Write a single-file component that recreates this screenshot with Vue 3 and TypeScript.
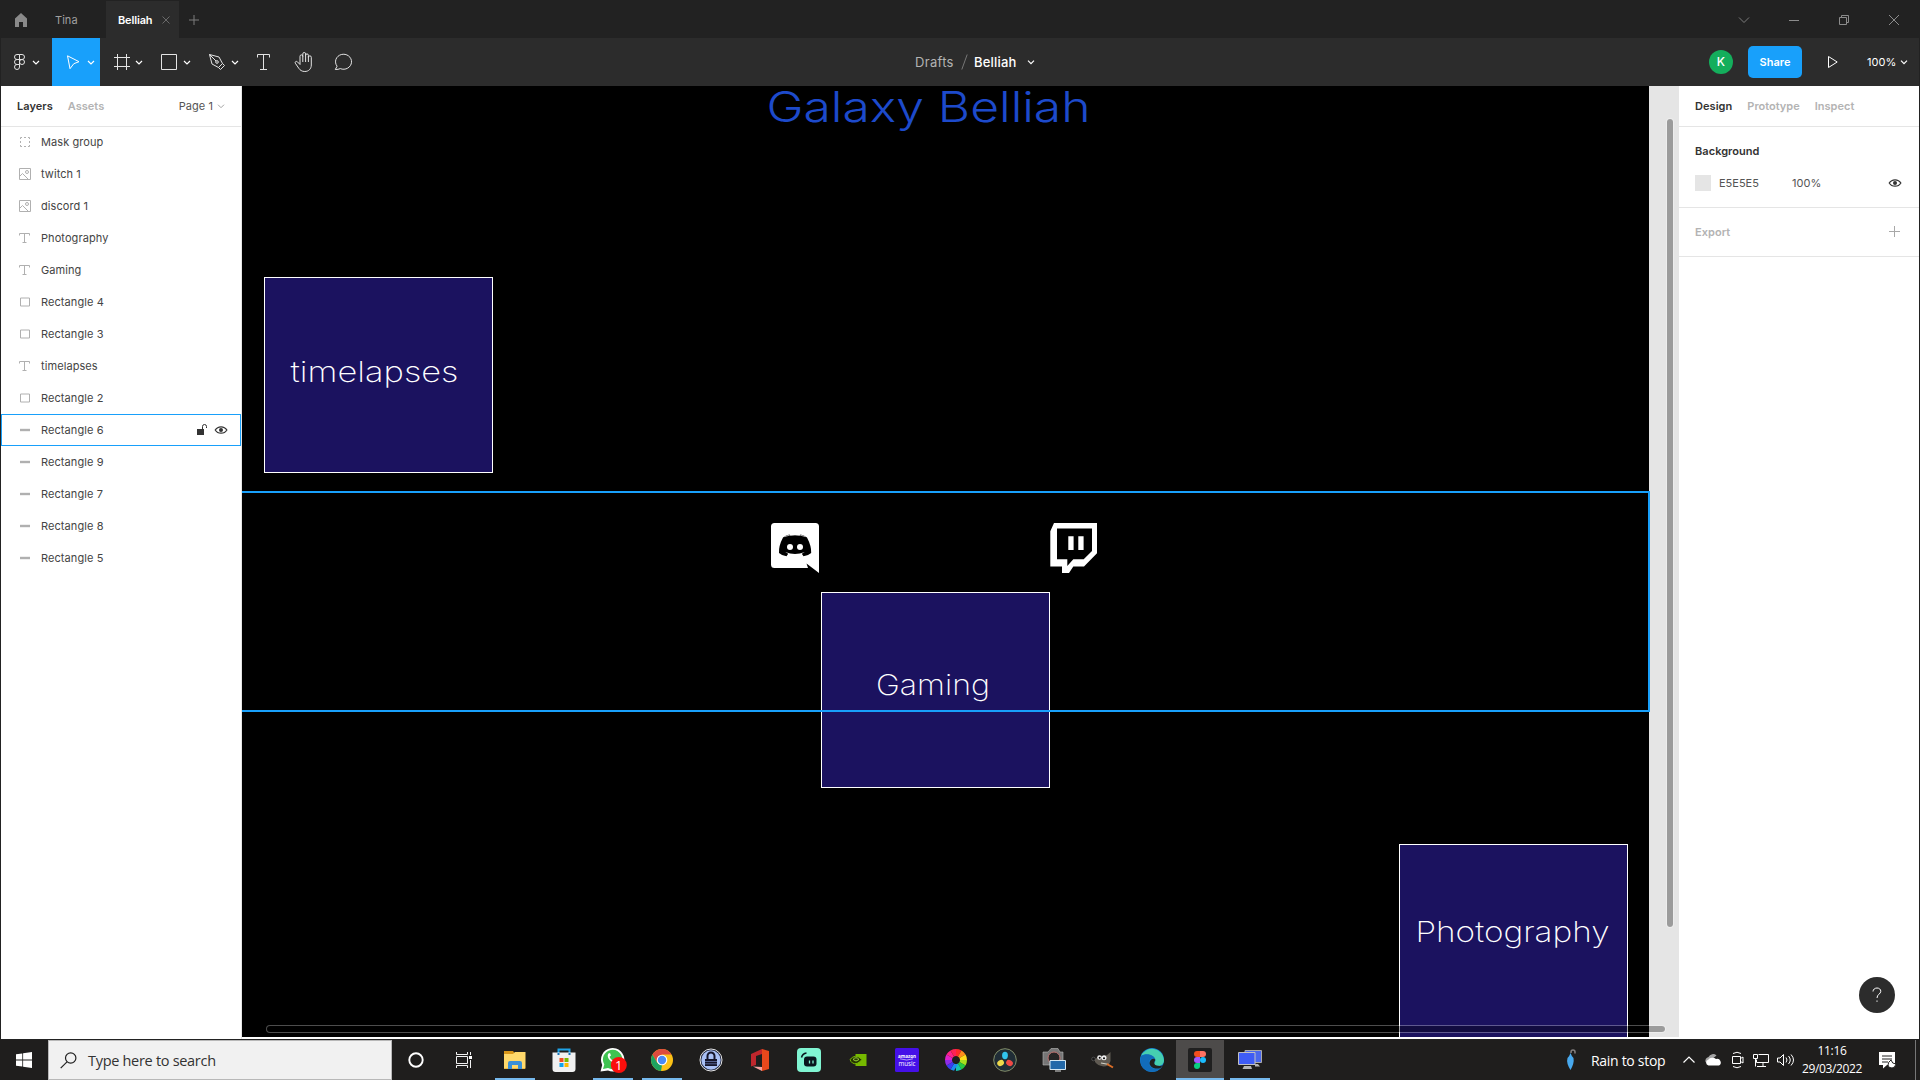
<script setup lang="ts">
interface Layer {
  name: string
  kind: 'mask' | 'image' | 'text' | 'rect' | 'line'
  hovered?: boolean
}

const layers: Layer[] = [
  { name: 'Mask group', kind: 'mask' },
  { name: 'twitch 1', kind: 'image' },
  { name: 'discord 1', kind: 'image' },
  { name: 'Photography', kind: 'text' },
  { name: 'Gaming', kind: 'text' },
  { name: 'Rectangle 4', kind: 'rect' },
  { name: 'Rectangle 3', kind: 'rect' },
  { name: 'timelapses', kind: 'text' },
  { name: 'Rectangle 2', kind: 'rect' },
  { name: 'Rectangle 6', kind: 'line', hovered: true },
  { name: 'Rectangle 9', kind: 'line' },
  { name: 'Rectangle 7', kind: 'line' },
  { name: 'Rectangle 8', kind: 'line' },
  { name: 'Rectangle 5', kind: 'line' },
]

const wheel = ['#ff2a2a', '#ff8a1c', '#ffd91a', '#a5e01e', '#27c840', '#16c5b0', '#1c8cf0', '#3a3df0', '#8f2be8', '#e022c8', '#ff2288', '#ff2255']
</script>

<template>
  <div class="screen">
    <header class="titlebar">
      <svg class="home" width="14" height="16" viewBox="0 0 14 16"><path d="M1 6.500 7 1l6 5.500V15H9v-5H5v5H1z" fill="#8a8a8a" /></svg>
      <span class="tab tina">Tina</span>
      <div class="tab active">
        <span>Belliah</span>
        <svg width="8" height="8" viewBox="0 0 8 8"><path d="M.5.5l7 7M7.500.5l-7 7" stroke="#6a6a6a" fill="none" /></svg>
      </div>
      <svg class="newtab" width="10" height="10" viewBox="0 0 10 10"><path d="M5 0v10M0 5h10" stroke="#7c7c7c" fill="none" /></svg>
      <svg class="winbtns" width="200" height="38" viewBox="1719 0 200 38" fill="none" stroke="#8c8c8c">
        <path d="M1739 17.500l5 5 5-5" stroke="#7c7c7c" />
        <path d="M1789 20.500h10" />
        <path d="M1839.500 17.500h7v7h-7zM1841.500 17.500v-2h7v7h-2" />
        <path d="M1889 15l10 10M1899 15l-10 10" />
      </svg>
    </header>

    <div class="toolbar">
      <div class="tools">
        <svg width="51" height="48" viewBox="1 38 51 48">
          <path d="M19.500 54.500H17a2.500 2.500 0 0 0 0 5h2.500zM19.500 54.500H22a2.500 2.500 0 0 1 0 5h-2.500M19.500 59.500H17a2.500 2.500 0 0 0 0 5h2.500zM19.500 64.500H17a2.500 2.500 0 1 0 2.500 2.500z" />
          <circle cx="22" cy="62" r="2.500" />
          <path class="chev" d="M33 61l3 3 3-3" />
        </svg>
        <svg class="on" width="48" height="48" viewBox="52 38 48 48">
          <path d="M67.500 55.800l11.500 5.900-5.200 2-3.800 5z" />
          <path class="chev" d="M88 61l3 3 3-3" />
        </svg>
        <svg width="48" height="48" viewBox="100 38 48 48">
          <path d="M117.500 54v16M126.500 54v16M114 57.500h16M114 66.500h16" />
          <path class="chev" d="M136 61l3 3 3-3" />
        </svg>
        <svg width="48" height="48" viewBox="148 38 48 48">
          <path d="M161.500 54.500h15v15h-15z" />
          <path class="chev" d="M184 61l3 3 3-3" />
        </svg>
        <svg width="48" height="48" viewBox="196 38 48 48">
          <path d="M209.500 54.500l9.500 2.500 3.500 6.500-4 4-6.500-3.500zM209.500 54.500l6.500 6.500M222.500 63.500l2 2-4 4-2-2" />
          <circle cx="217" cy="62" r="1.300" />
          <path class="chev" d="M232 61l3 3 3-3" />
        </svg>
        <svg width="40" height="48" viewBox="244 38 40 48"><path d="M257.500 57.500v-3h12v3M263.500 54.500v15M260 69.500h7" /></svg>
        <svg width="40" height="48" viewBox="284 38 40 48">
          <path d="M300 64.500v-8.200a1.400 1.400 0 0 1 2.800 0v-2.400a1.400 1.400 0 0 1 2.800 0v1.400a1.400 1.400 0 0 1 2.800 0v2a1.450 1.450 0 0 1 2.900 0V65c0 4-2.800 6.500-6.500 6.500-3 0-4.800-1.400-6-3.200l-3.500-5.100c-.7-1.300 1-2.500 2.100-1.400l2.600 2.700M302.800 56v6M305.600 55v7M308.400 56v6" />
        </svg>
        <svg width="40" height="48" viewBox="324 38 40 48"><path d="M335.300 69.500l1.800-3.300a8 7.500 0 1 1 3.200 2.400c-1.400.7-3 .9-5 .9z" /></svg>
      </div>
      <div class="crumbs">
        <span class="drafts">Drafts</span>
        <svg width="7" height="16" viewBox="0 0 7 16"><path d="M.8 15.500L6.200.5" stroke="#777" fill="none" /></svg>
        <span class="file">Belliah</span>
        <svg class="crumbchev" width="8" height="5" viewBox="0 0 8 5"><path d="M1 .7l3 3 3-3" fill="none" stroke="#fff" stroke-width="1.200" /></svg>
      </div>
      <div class="actions">
        <span class="avatar">K</span>
        <span class="share">Share</span>
        <svg class="play" width="12" height="14" viewBox="0 0 12 14"><path d="M1.500 1.500v11l8.700-5.500z" fill="none" stroke="#fff" /></svg>
        <span class="zoomlevel">100%</span>
        <svg width="8" height="5" viewBox="0 0 8 5"><path d="M1 .7l3 3 3-3" fill="none" stroke="#fff" stroke-width="1.200" /></svg>
      </div>
    </div>

    <main class="workspace">
      <aside class="left">
        <div class="tabs">
          <b>Layers</b><b class="dim assets">Assets</b><span class="page">Page 1</span>
          <svg width="8" height="5" viewBox="0 0 8 5"><path d="M1 .7l3 3 3-3" fill="none" stroke="#a3a3a3" /></svg>
        </div>
        <div v-for="layer in layers" :key="layer.name" class="layer" :class="{ hovered: layer.hovered }">
          <svg width="12" height="12" viewBox="0 0 12 12" fill="none" stroke="#b0b0b0">
            <path v-if="layer.kind === 'mask'" d="M1.500 3V1.500H3M5 1.500h2M9 1.500h1.500V3M10.500 5v2M10.500 9v1.500H9M7 10.500H5M3 10.500H1.500V9M1.500 7V5" />
            <g v-else-if="layer.kind === 'image'"><path d="M.5.5h11v11H.5zM.5 8.500l3-3 6 6" /><circle cx="8" cy="4" r="1.500" /></g>
            <path v-else-if="layer.kind === 'text'" d="M.5 3.500v-2h10v2M5.500 1.500v9M3.500 10.500h4" />
            <path v-else-if="layer.kind === 'rect'" d="M1.500 2h9v8h-9z" />
            <path v-else d="M1 6h10" stroke-width="2.400" />
          </svg>
          <span>{{ layer.name }}</span>
          <svg v-if="layer.hovered" class="rowtools" width="32" height="14" viewBox="196 423 32 14">
            <path d="M197 429h7v6h-7z" fill="#333" />
            <path d="M202.500 429v-2.500a2 2 0 0 1 4 0v1.500" fill="none" stroke="#333" />
            <path d="M215.200 430c2.700-4.300 9-4.300 11.700 0-2.700 4.300-9 4.300-11.700 0z" fill="none" stroke="#333" stroke-width="1.200" />
            <circle cx="221" cy="430" r="2" fill="#333" />
          </svg>
        </div>
      </aside>

      <section class="canvas">
        <div class="frame"></div>
        <div class="box timelapses"></div>
        <div class="box gaming"></div>
        <div class="box photography"></div>
        <svg class="art" width="1437" height="951" viewBox="242 86 1437 951">
          <g class="label">
            <text class="heading" x="766.500" y="121.500" textLength="324" lengthAdjust="spacingAndGlyphs">Galaxy Belliah</text>
            <text x="290.500" y="381.500" textLength="168" lengthAdjust="spacingAndGlyphs">timelapses</text>
            <text x="876" y="695" textLength="114" lengthAdjust="spacingAndGlyphs">Gaming</text>
            <text x="1415.500" y="941.500" textLength="194" lengthAdjust="spacingAndGlyphs">Photography</text>
          </g>
          <g transform="translate(771 523)">
            <path d="M3.500 0h41A3.500 3.500 0 0 1 48 3.500V50L35.500 40.500l1.500 4.500H3.500A3.500 3.500 0 0 1 0 41.500v-38A3.500 3.500 0 0 1 3.500 0z" fill="#fff" />
            <path d="M12 14.500q3-2.600 6.600-3l.8 1.100q4.600-.7 9.200 0l.8-1.100q3.600.4 6.600 3 4.500 8.500 4.200 15.500-3.400 3-7.700 3.200l-1.700-2.500 3-1.600q-9.800 4-19.600 0l3 1.600-1.700 2.500Q11.200 33 8 30 7.500 23 12 14.500z" fill="#000" />
            <path d="M13.500 13.600q10.500-4 21 0" fill="none" stroke="#fff" stroke-width=".7" />
            <circle cx="19" cy="24" r="3" fill="#fff" /><circle cx="29" cy="24" r="3" fill="#fff" />
          </g>
          <g transform="translate(1050 523)">
            <path fill-rule="evenodd" fill="#fff" d="M4 0h43v30.300L34 43.500H23.300L19 50h-7v-6.500H.3V8.300zM7 5.500v30.800h10.300V43l6-6.700h10.400L42 28V5.500zM18.300 13.300h5.300V27h-5.300zM28.300 13.300h5.300V27h-5.300z" />
          </g>
        </svg>
        <div class="outline"></div>
        <i class="vscroll"></i>
        <i class="hscroll"></i>
      </section>

      <aside class="right">
        <div class="tabs"><b>Design</b><b class="dim proto">Prototype</b><b class="dim insp">Inspect</b></div>
        <div class="background">
          <b>Background</b>
          <div class="fill">
            <i></i><span class="hex">E5E5E5</span><span>100%</span>
            <svg width="14" height="10" viewBox="214 425 14 10">
              <path d="M215.200 430c2.700-4.300 9-4.300 11.700 0-2.700 4.300-9 4.300-11.700 0z" fill="none" stroke="#333" stroke-width="1.200" />
              <circle cx="221" cy="430" r="2" fill="#333" />
            </svg>
          </div>
        </div>
        <div class="export"><b>Export</b><svg width="11" height="11" viewBox="0 0 11 11"><path d="M5.500 0v11M0 5.500h11" stroke="#a8a8a8" fill="none" /></svg></div>
        <div class="help">
          <svg width="10" height="16" viewBox="0 0 10 16" fill="none" stroke="#fff"><path d="M1 4.500C1 2.500 2.800 1 5 1s3.800 1.400 3.800 3.300C8.800 7 5 7.300 5 11" /><path d="M5 13.500v1.300" /></svg>
        </div>
      </aside>
    </main>

    <footer class="taskbar">
      <div class="start"><svg width="16" height="16" viewBox="0 0 16 16"><path d="M0 2.300l6.300-.9v6.100H0zM7.100 1.200L16 0v7.500H7.100zM0 8.400h6.300v6.100L0 13.700zM7.100 8.400H16V16l-8.900-1.300z" fill="#fff" /></svg></div>
      <div class="search">
        <svg width="17" height="17" viewBox="0 0 17 17" fill="none" stroke="#222" stroke-width="1.200"><circle cx="10.700" cy="6" r="5.200" /><path d="M7 9.900L.7 16.200" /></svg>
        <span>Type here to search</span>
      </div>
      <div class="sys"><svg width="16" height="16" viewBox="0 0 16 16"><circle cx="8" cy="8" r="6.700" fill="none" stroke="#fff" stroke-width="1.900" /></svg></div>
      <div class="sys"><svg width="17" height="16" viewBox="0 0 17 16" fill="none" stroke="#f2f2f2"><path d="M.5 0v2.500h11V0M.5 4.500h11v7H.5zM.5 16v-2.500h11V16M14.500 0v3M14.500 8v8" /><path d="M13 4h3v3h-3z" fill="#fff" stroke="none" /></svg></div>

      <div class="apps">
        <div class="app run"><svg viewBox="0 0 24 24"><path d="M1 3h9l1.500 2H22v16H1z" fill="#d9971a" /><path d="M1 6h9l2-2h10.500v16.500H1z" fill="#ffd96b" /><path d="M5 21v-6a2 2 0 0 1 2-2h10a2 2 0 0 1 2 2v6h-4v-4H9v4z" fill="#3a90d8" /></svg></div>
        <div class="app"><svg viewBox="0 0 24 24"><path d="M6.500 5V1.500h11V5" fill="none" stroke="#1fa3e8" stroke-width="2" /><path d="M.5 4.500h23V21a3 3 0 0 1-3 3h-17a3 3 0 0 1-3-3z" fill="#f0f0f0" /><path d="M6.500 5v2M17.500 5v2" stroke="#1573b8" stroke-width="2" /><path d="M7.500 10h4v4h-4z" fill="#f04e23" /><path d="M12.500 10h4v4h-4z" fill="#7bb900" /><path d="M7.500 15h4v4h-4z" fill="#10a4ee" /><path d="M12.500 15h4v4h-4z" fill="#ffb900" /></svg></div>
        <div class="app run"><svg class="wa" viewBox="0 0 28 26"><path d="M.5 24.500l1.700-6.500A11.700 11.700 0 1 1 8 23.500z" fill="#fff" /><path d="M3 22l1.300-4.500A9.700 9.700 0 1 1 8 21z" fill="#3fc351" /><path d="M8.500 6.500c-2.800 3 2.500 10.500 8 10l1.500-2-3-2-1.500 1.300c-2-.8-3.200-2.200-4-4L11 8.500 10 6z" fill="#fff" /><circle cx="18.800" cy="18" r="8" fill="#fb0f0c" /><text x="18.800" y="22.500" text-anchor="middle" fill="#fff" font-size="13">1</text></svg></div>
        <div class="app run"><svg viewBox="0 0 24 24"><circle cx="12" cy="12" r="11" fill="#fbc116" /><path d="M2.500 6.500A11 11 0 0 1 21.500 6.500H12l-4.800 8.300z" fill="#dd4b3e" /><path d="M2.500 6.500l4.700 8.300L12 17.500 11 23A11 11 0 0 1 2.500 6.500z" fill="#1da260" /><circle cx="12" cy="12" r="5.300" fill="#fff" /><circle cx="12" cy="12" r="4.200" fill="#4a8af4" /></svg></div>
        <div class="app"><svg viewBox="0 0 24 24"><circle cx="12" cy="12" r="11" fill="#1c2238" stroke="#e6e6e6" stroke-width="1" /><circle cx="12" cy="12" r="9.700" fill="#a9c0f5" /><path d="M8.500 11V8a3.500 3.500 0 0 1 7 0v3" fill="none" stroke="#15152a" stroke-width="2" /><path d="M6 11h12v7H6z" fill="#15152a" /><path d="M6 13.500h12M6 15.800h12" stroke="#6f83bd" stroke-width=".7" /></svg></div>
        <div class="app"><svg viewBox="0 0 24 24"><path d="M14 1l7 2v18l-7 2z" fill="#e8481c" /><path d="M3 6l11-5v5L8 8v9l-5 1.500z" fill="#c1272d" /><path d="M5 18.500l9 .5v4z" fill="#f4a3a0" /></svg></div>
        <div class="app"><svg viewBox="0 0 24 24"><rect width="24" height="24" rx="4" fill="#80f5d2" /><rect x="7" y="8.500" width="12.500" height="10" rx="3" fill="#09161d" /><path d="M4.500 9.500q1-4 5-4.500" fill="none" stroke="#09161d" stroke-width="1.500" /><path d="M12.500 12.500v3M16 12.500v3" stroke="#80f5d2" stroke-width="1.300" /></svg></div>
        <div class="app"><svg viewBox="0 0 24 24"><path d="M9.500 6h11v12h-11z" fill="#76b900" /><path d="M4 11.500q5.500-6.500 12 0-5 6-9.500 3.500Q4.500 13.500 4 11.500z" fill="#263600" stroke="#76b900" /><path d="M7 11.500q3-3.500 6 0-3 3-6 0z" fill="none" stroke="#9bd63d" /></svg></div>
        <div class="app"><svg viewBox="0 0 24 24"><rect width="24" height="24" rx="1.500" fill="#4510e8" /><text x="12" y="9.800" text-anchor="middle" textLength="18" lengthAdjust="spacingAndGlyphs" fill="#fff" font-size="5.500" font-weight="700">amazon</text><text x="12" y="17.500" text-anchor="middle" textLength="17" lengthAdjust="spacingAndGlyphs" fill="#fff" font-size="7">music</text><path d="M5 10.800q7 2.500 13 0" fill="none" stroke="#fff" stroke-width=".6" /></svg></div>
        <div class="app"><svg viewBox="0 0 24 24"><g fill="none" stroke-width="7"><circle v-for="(c, i) in wheel" :key="c" cx="12" cy="12" r="7.500" :stroke="c" pathLength="12" stroke-dasharray="1 11" :stroke-dashoffset="3 - i" /></g></svg></div>
        <div class="app"><svg viewBox="0 0 24 24"><circle cx="12" cy="12" r="11.300" fill="#202d36" stroke="#8d9a70" stroke-width=".9" /><ellipse cx="12" cy="7.500" rx="2.900" ry="3.700" fill="#31c3ee" /><ellipse cx="7.600" cy="15" rx="3.500" ry="2.900" fill="#edd84a" transform="rotate(-30 7.600 15)" /><ellipse cx="16.500" cy="15" rx="3.500" ry="2.900" fill="#ef4a45" transform="rotate(30 16.500 15)" /></svg></div>
        <div class="app"><svg viewBox="0 0 24 24"><path d="M1 4h5l3-3.500h7L18 4h3v13H1z" fill="#767676" stroke="#bbb" stroke-width=".6" /><circle cx="12" cy="10" r="6" fill="#252525" stroke="#bd706e" /><path d="M8 12.500h15.500v9H8z" fill="#2369a9" stroke="#d5e8f3" /><path d="M13 22.500h6v1h-6z" fill="#ddd" /></svg></div>
        <div class="app"><svg viewBox="0 0 24 24"><path d="M4 11q4-3.500 9-3 4-1 6.500-4v9q-1.500 5.500-7 5.500-6-1-8.500-4.500z" fill="#5f5a52" /><circle cx="8.500" cy="9.500" r="2.300" fill="#eee" /><circle cx="13" cy="9.800" r="2.500" fill="#eee" /><circle cx="8.700" cy="9.800" r="1" /><circle cx="13" cy="10.200" r="1" /><circle cx="2.500" cy="11" r="1.800" fill="#151515" stroke="#777" stroke-width=".5" /><path d="M10 15l8 1.500" stroke="#d2d2c6" stroke-width="1.200" /><path d="M16 16l6 3.500" stroke="#dc6e27" stroke-width="2" /></svg></div>
        <div class="app"><svg viewBox="0 0 24 24"><circle cx="12" cy="12" r="12" fill="#147fd2" /><path d="M1 8a12 12 0 0 1 23 4c0 5-4 6.500-8 5.500-2.500-1-2.500-2-1-3.500C17 9 7 4 1 8z" fill="#46cfb0" /><path d="M1 8C7 4 15 7 15.500 12c-2-3-7-1.500-6.500 3 .5 5 6 7.500 12 4.500C15 28-3 24 1 8z" fill="#126cba" /><path d="M15.500 12c-2.500 3-1 6 4 6q2 0 4-1.500l-3 3.500c-7 2-11-2-11-5 0-3 4-6 6-3z" fill="#202020" /></svg></div>
        <div class="app current"><svg viewBox="0 0 24 24"><rect width="24" height="24" rx="2" fill="#202020" /><path d="M12 3H9a3 3 0 0 0 0 6h3z" fill="#f24e1e" /><path d="M12 3h3a3 3 0 0 1 0 6h-3z" fill="#ff7262" /><path d="M12 9H9a3 3 0 0 0 0 6h3z" fill="#a259ff" /><circle cx="15" cy="12" r="3" fill="#1abcfe" /><path d="M12 15H9a3 3 0 1 0 3 3z" fill="#0acf83" /></svg></div>
        <div class="app run"><svg viewBox="0 0 24 24"><path d="M7 2.500h16.500v12H7z" fill="#4b68ec" stroke="#aaa" /><path d="M.5 4.500H17v12H.5z" fill="#3e5cf5" stroke="#c1c1c1" /><path d="M6 18h7l1 3H4.500zM17 16h3l2 2.500h-5z" fill="#b5b5b5" /></svg></div>
      </div>

      <svg class="umbrella" width="12" height="24" viewBox="0 0 12 24"><path d="M6 5V4a2 2 0 0 1 4 0v1.500" fill="none" stroke="#858080" stroke-width="1.500" /><path d="M5.500 5q-1 3-3 5-1.500 5 3 12 4-7 3-12-2-2-3-5z" fill="#48a9ee" /></svg>
      <span class="weather">Rain to stop</span>
      <svg class="tray" width="120" height="40" viewBox="1675 1040 120 40" fill="none" stroke="#fff">
        <path d="M1683.500 1062.500l5.500-5.500 5.500 5.500" stroke-width="1.200" />
        <path d="M1705.500 1062a4 4 0 0 1 3-5 5 5 0 0 1 8-1.500l-5 4-3 4z" fill="#a5a5a5" stroke="none" />
        <path d="M1708.500 1065.500a3 3 0 0 1-.3-5.800 5 4 0 0 1 7.800-.7 3.600 3.600 0 0 1 3 6.500z" fill="#fff" stroke="none" />
        <path d="M1732.500 1056.500h8v7h-8zM1740.500 1058.500l2.500-1.500v6l-2.500-1.500M1733 1053.500q4-2.500 8 0M1733 1066.500q4 2.500 8 0" />
        <path d="M1758.500 1054.500h10v8h-12v-3M1763 1062.500v3.500M1757 1066.500h9M1753.500 1054.500h4v4h-4zM1755.500 1058.500v8" />
        <path d="M1777.500 1058h2.500l3.500-3.500v11l-3.500-3.500h-2.500zM1786 1057.500q2 2.500 0 5M1788.500 1056q3.500 4 0 8M1791 1054.500q5 5.500 0 11" />
      </svg>
      <div class="clock"><span>11:16</span><span class="date">29/03/2022</span></div>
      <svg class="notes" width="18" height="17" viewBox="0 0 18 17"><path d="M0 0h16v13H8l-4 3.500V13H0z" fill="#fff" /><path d="M3 4h10M3 7h10M3 10h6" stroke="#222" /><path d="M12 8q1 4 5 4-1 4-4 4-4 0-4-3 0-3 3-5z" fill="#fff" stroke="#222" /></svg>
      <i class="peek"></i>
    </footer>
  </div>
</template>

<style>
body { margin: 0; overflow: hidden; background: #222; }
</style>

<style scoped>
.screen { width: 1920px; height: 1080px; display: flex; flex-direction: column; background: #222; font: 11px/16px Inter, "Liberation Sans", sans-serif; color: #333; overflow: hidden; letter-spacing: .05px; }
svg { display: block; flex: none; }
b { font-weight: 600; }
.dim { color: #b3b3b3; }

.titlebar { height: 38px; display: flex; align-items: center; color: #a0a0a0; flex: none; }
.home { margin: 2px 0 0 14px; }
.tab { height: 37px; margin-top: 1px; display: flex; align-items: center; }
.tina { margin-left: 27px; width: 51px; }
.tab.active { width: 73px; box-sizing: border-box; padding: 0 9px 0 12px; justify-content: space-between; background: #2c2c2c; color: #fff; font-weight: 600; letter-spacing: -.15px; }
.newtab { margin: 2px 0 0 10px; }
.winbtns { margin-left: auto; margin-right: 1px; }

.toolbar { height: 48px; flex: none; margin: 0 1px; display: flex; justify-content: space-between; background: #2c2c2c; color: #fff; }
.tools { display: flex; width: 914px; }
.tools svg { fill: none; stroke: #e4e4e4; }
.tools .on { background: #18a0fb; stroke: #fff; }
.tools .chev { stroke: #fff; stroke-width: 1.200; }
.crumbs { display: flex; align-items: center; font-size: 13px; flex: 1; }
.drafts { color: #b3b3b3; width: 46px; letter-spacing: .3px; }
.file { margin-left: 6px; width: 53px; font-weight: 500; letter-spacing: .2px; }
.actions { display: flex; align-items: center; padding-right: 11px; }
.avatar { width: 24px; height: 24px; border-radius: 50%; background: #14ae5c; text-align: center; line-height: 24px; font-weight: 500; font-size: 12px; }
.share { width: 54px; height: 32px; line-height: 32px; border-radius: 5px; background: #18a0fb; margin-left: 15px; text-align: center; font-weight: 600; }
.play { margin-left: 25px; }
.zoomlevel { margin-left: 28px; width: 33px; }

.workspace { height: 953px; flex: none; display: flex; margin: 0 1px; background: #fff; }
.left { width: 240px; border-right: 1px solid #e5e5e5; }
.tabs { height: 40px; display: flex; align-items: center; box-shadow: 0 1px #e5e5e5; padding: 0 16px; box-sizing: border-box; }
.assets { margin-left: 15px; letter-spacing: 0; }
.page { margin-left: auto; margin-right: 4px; color: #555; }
.layer { height: 32px; display: flex; align-items: center; padding-left: 18px; box-sizing: border-box; }
.layer span { margin-left: 10px; color: #444; letter-spacing: .08px; }
.hovered { box-shadow: inset 0 0 0 1px #18a0fb; }
.rowtools { margin-left: auto; margin-right: 13px; }

.canvas { position: relative; width: 1437px; height: 951px; background: #e5e5e5; }
.frame { position: absolute; left: 0; top: 0; width: 1407px; height: 951px; background: #000; }
.box { position: absolute; width: 229px; height: 196px; box-sizing: border-box; background: #1b125f; border: 1px solid #fff; }
.timelapses { left: 22px; top: 191px; }
.gaming { left: 579px; top: 506px; }
.photography { left: 1157px; top: 758px; height: 193px; border-bottom: 0; }
.art { position: absolute; left: 0; top: 0; overflow: visible; }
.label { font-family: Inter, "Open Sans", sans-serif; font-weight: 250; font-size: 28.500px; fill: #fff; letter-spacing: 0; }
.heading { font-size: 42.500px; fill: #1d4acb; font-weight: 300; }
.outline { position: absolute; left: 0; top: 405px; width: 1408px; height: 221px; box-sizing: border-box; border: 2px solid #18a0fb; border-left: 0; }
.vscroll { position: absolute; left: 1424px; top: 32px; width: 8px; height: 810px; box-sizing: border-box; border-radius: 4px; border: 1px solid rgba(255,255,255,.3); background: rgba(0,0,0,.32); background-clip: padding-box; }
.hscroll { position: absolute; left: 24px; top: 939px; width: 1400px; height: 8px; box-sizing: border-box; border-radius: 4px; border: 1px solid rgba(255,255,255,.3); background: rgba(0,0,0,.32); background-clip: padding-box; }

.right { width: 240px; display: flex; flex-direction: column; }
.right .tabs { flex: none; }
.proto { margin-left: 15px; letter-spacing: 0; }
.insp { margin-left: 15px; }
.background { height: 81px; flex: none; padding: 17px 16px 0; box-sizing: border-box; box-shadow: 0 1px #e5e5e5; }
.fill { display: flex; align-items: center; margin-top: 16px; color: #555; }
.fill i { width: 16px; height: 16px; background: #e5e5e5; margin-right: 8px; }
.hex { width: 73px; letter-spacing: 0; }
.fill svg { margin-left: auto; margin-right: 1px; }
.export { height: 49px; flex: none; box-sizing: border-box; display: flex; align-items: center; justify-content: space-between; padding: 0 19px 0 16px; color: #b3b3b3; box-shadow: 0 1px #e5e5e5; }
.help { width: 36px; height: 36px; border-radius: 50%; background: #2c2c2c; display: flex; align-items: center; justify-content: center; margin: auto 24px 26px auto; }

.taskbar { height: 40px; flex: none; margin-top: 1px; display: flex; align-items: center; background: #1f1e1d; color: #fff; font-family: "Open Sans", "Noto Sans", sans-serif; letter-spacing: 0; }
.start, .sys { width: 48px; display: flex; justify-content: center; }
.search { width: 344px; height: 40px; box-sizing: border-box; border: 1px solid #b8b8b8; background: #f1f1f1; color: #333; display: flex; align-items: center; padding-left: 11px; font-size: 14.500px; white-space: nowrap; }
.search span { margin: 1px 0 0 11px; letter-spacing: -.3px; }
.apps { display: flex; height: 40px; margin-left: 2px; }
.app { width: 49px; display: flex; align-items: center; justify-content: center; box-sizing: border-box; background: linear-gradient(#76b9ed, #76b9ed) center bottom / 0 2px no-repeat; }
.app svg { width: 24px; height: 24px; }
.app .wa { width: 28px; height: 26px; margin-left: 3px; }
.app.run { background-size: 40px 2px; }
.app.current { background-color: #4d4b4a; background-size: 100% 2px; width: 48px; margin-right: 1px; }
.umbrella { margin-left: 291px; }
.weather { margin: 1px 0 0 14px; width: 84px; font-size: 14px; letter-spacing: -.3px; white-space: nowrap; }
.clock { width: 74px; display: flex; flex-direction: column; text-align: center; font-size: 12px; line-height: 18px; letter-spacing: -.35px; }
.notes { margin-left: 10px; }
.peek { width: 1px; height: 40px; background: #777; margin-left: auto; margin-right: 4px; }
</style>
